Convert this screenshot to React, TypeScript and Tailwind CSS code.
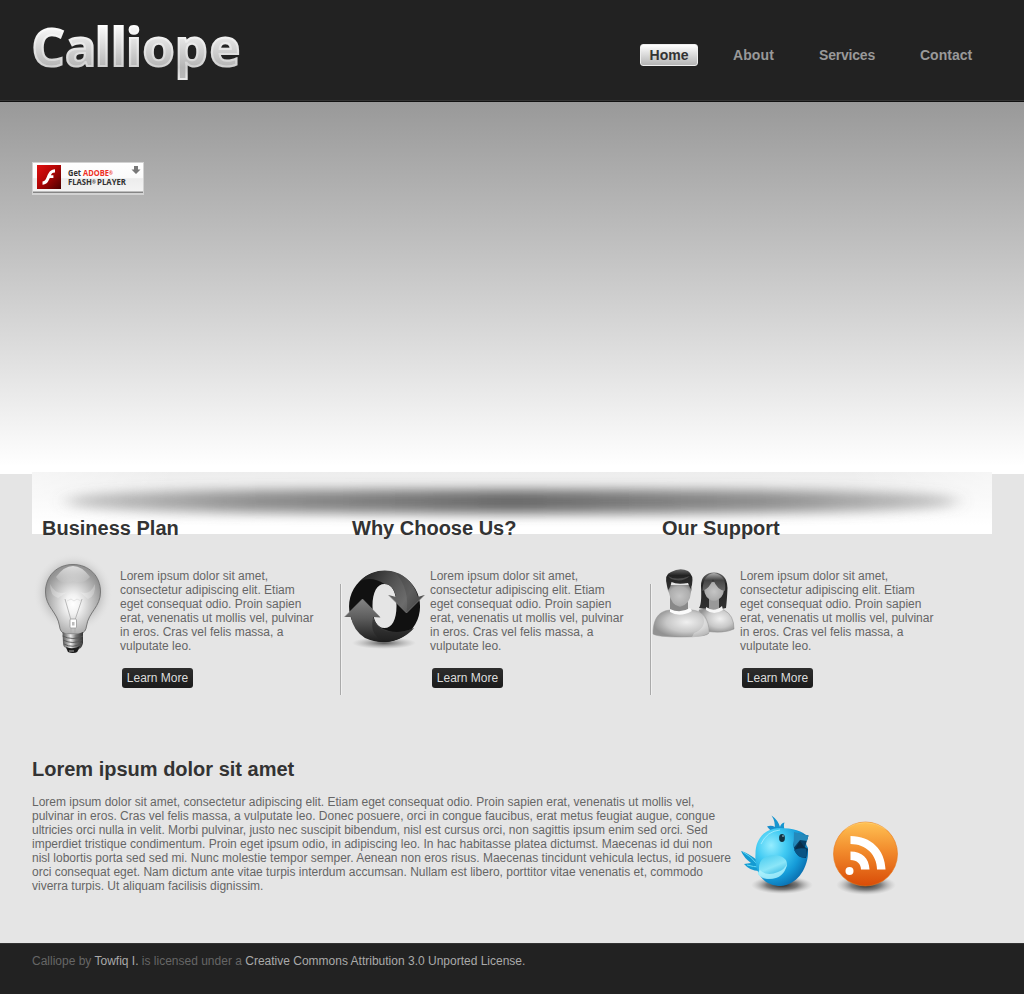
import React from "react";

const NAV = [
  { label: "About", cls: "w-[86px] tracking-[0.1px]" },
  { label: "Services", cls: "w-[101px] tracking-[-0.2px]" },
  { label: "Contact", cls: "w-[72px]" },
];
const BLURB = [
  "Lorem ipsum dolor sit amet,",
  "consectetur adipiscing elit. Etiam",
  "eget consequat odio. Proin sapien",
  "erat, venenatis ut mollis vel, pulvinar",
  "in eros. Cras vel felis massa, a",
  "vulputate leo.",
];
const BODY = [
  "Lorem ipsum dolor sit amet, consectetur adipiscing elit. Etiam eget consequat odio. Proin sapien erat, venenatis ut mollis vel,",
  "pulvinar in eros. Cras vel felis massa, a vulputate leo. Donec posuere, orci in congue faucibus, erat metus feugiat augue, congue",
  "ultricies orci nulla in velit. Morbi pulvinar, justo nec suscipit bibendum, nisl est cursus orci, non sagittis ipsum enim sed orci. Sed",
  "imperdiet tristique condimentum. Proin eget ipsum odio, in adipiscing leo. In hac habitasse platea dictumst. Maecenas id dui non",
  "nisl lobortis porta sed sed mi. Nunc molestie tempor semper. Aenean non eros risus. Maecenas tincidunt vehicula lectus, id posuere",
  "orci consequat eget. Nam dictum ante vitae turpis interdum accumsan. Nullam est libero, porttitor vitae venenatis et, commodo",
  "viverra turpis. Ut aliquam facilisis dignissim.",
];

type Stop = [number, string, number?];
function Linear({ id, stops, x2 = 0, y2 = 1 }: { id: string; stops: Stop[]; x2?: number; y2?: number }) {
  return (
    <linearGradient id={id} x1="0" y1="0" x2={x2} y2={y2}>
      {stops.map(([o, c, a]) => <stop key={o} offset={o} stopColor={c} stopOpacity={a ?? 1} />)}
    </linearGradient>
  );
}
function Radial({ id, stops, cx = 0.5, cy = 0.5, r = 0.5 }: { id: string; stops: Stop[]; cx?: number; cy?: number; r?: number }) {
  return (
    <radialGradient id={id} cx={cx} cy={cy} r={r}>
      {stops.map(([o, c, a]) => <stop key={o} offset={o} stopColor={c} stopOpacity={a ?? 1} />)}
    </radialGradient>
  );
}

function Logo() {
  return (
    <svg width="220" height="80" viewBox="28 6 220 80" className="block overflow-visible">
      <defs>
        <linearGradient id="logo" gradientUnits="userSpaceOnUse" x1="0" y1="25" x2="0" y2="78">
          <stop offset="0" stopColor="#fcfcfc" />
          <stop offset="0.8" stopColor="#b4b4b4" />
          <stop offset="1" stopColor="#b8b8b8" />
        </linearGradient>
        <linearGradient id="logoEdge" gradientUnits="userSpaceOnUse" x1="0" y1="25" x2="0" y2="78">
          <stop offset="0" stopColor="#ffffff" />
          <stop offset="0.8" stopColor="#d0d0d0" />
          <stop offset="1" stopColor="#e8e8e8" />
        </linearGradient>
      </defs>
      <text x="31.5 65 94.700 110.700 126 142.500 174.800 209.500" y="66" fontSize="52" fontWeight="700"
        fill="url(#logo)" stroke="url(#logoEdge)" strokeWidth="2.2" strokeLinejoin="miter" className="font-['Open_Sans',sans-serif]">Calliope</text>
    </svg>
  );
}

function FlashBadge() {
  return (
    <svg width="112" height="33" viewBox="0 0 112 33" className="block">
      <defs>
        <Linear id="fbg" stops={[[0, "#ffffff"], [0.5, "#fafafa"], [0.52, "#ececec"], [1, "#f4f4f4"]]} />
        <Linear id="fred" x2={1} stops={[[0, "#e01010"], [0.45, "#b40505"], [1, "#4a0000"]]} />
      </defs>
      <rect width="112" height="33" fill="#d2d2d2" />
      <rect x="1" y="1" width="110" height="30" fill="url(#fbg)" />
      <rect x="1" y="29.5" width="110" height="1.5" fill="#858585" />
      <rect x="5" y="3" width="24" height="24" fill="url(#fred)" />
      <path d="M23 7.2v3.2c-2.8 0-3.5 1.2-4.1 2.8h2.5v2.8h-3.6c-1.6 3.8-3.1 6.500-7.3 6.700v-3.2c2.6-.2 3.3-2.1 4.4-4.8C16.500 10.700 18.200 7.400 23 7.200z" fill="#fff" />
      <g fontSize="8" fontWeight="700" className="font-['Open_Sans',sans-serif]" fill="#303030">
        <text x="36" y="14" textLength="13" lengthAdjust="spacingAndGlyphs">Get</text>
        <text x="51" y="14" fill="#ee2e24"><tspan textLength="26" lengthAdjust="spacingAndGlyphs">ADOBE</tspan><tspan x="77" dy="-1.5" fontSize="4.500">®</tspan></text>
        <text x="36" y="23"><tspan textLength="24" lengthAdjust="spacingAndGlyphs">FLASH</tspan><tspan x="60" dy="-1.5" fontSize="4.500">®</tspan><tspan x="65" dy="1.5" textLength="29" lengthAdjust="spacingAndGlyphs">PLAYER</tspan></text>
      </g>
      <path d="M102 4h4v3.500h2.500l-4.500 4.500-4.500-4.500h2.500z" fill="#777" />
    </svg>
  );
}

function ShadowBar() {
  return (
    <svg width="960" height="62" viewBox="0 0 960 62" className="block">
      <defs>
        <Linear id="sbg" stops={[[0, "#ededed"], [0.4, "#f4f4f4"], [0.85, "#ffffff"], [1, "#ffffff"]]} />
        <Linear id="sdark" x2={1} y2={0} stops={[[0, "#777", 0.4], [0.2, "#666", 0.7], [0.5, "#505050", 0.86], [0.8, "#666", 0.7], [1, "#777", 0.4]]} />
        <Linear id="sside" x2={1} y2={0} stops={[[0, "#fff", 0.5], [0.15, "#fff", 0], [0.85, "#fff", 0], [1, "#fff", 0.5]]} />
        <filter id="sblur" x="-5%" y="-200%" width="110%" height="500%"><feGaussianBlur stdDeviation="9 6" /></filter>
      </defs>
      <rect width="960" height="62" fill="url(#sbg)" />
      <rect width="960" height="62" fill="url(#sside)" />
      <path d="M34 29.500C34 18 180 17.500 480 17.500C780 17.500 926 18 926 29.500C926 40 780 41.500 480 41.500C180 41.500 34 40 34 29.500z" fill="url(#sdark)" filter="url(#sblur)" />
    </svg>
  );
}

function Bulb() {
  return (
    <svg width="88" height="110" viewBox="32 550 88 110" className="block">
      <defs>
        <Radial id="bglow" stops={[[0, "#999", 1], [0.65, "#b0b0b0", 0.7], [1, "#e5e5e5", 0]]} />
        <Radial id="bglass" cx={0.5} cy={0.57} r={0.55} stops={[[0, "#ffffff"], [0.25, "#f2f2f2"], [0.6, "#c6c6c6"], [1, "#939393"]]} />
        <Linear id="bshine" stops={[[0, "#fff", 0.7], [1, "#fff", 0.02]]} />
        <Linear id="bcap" x2={1} y2={0} stops={[[0, "#555"], [0.2, "#999"], [0.4, "#eee"], [0.65, "#777"], [1, "#333"]]} />
      </defs>
      <circle cx="73" cy="593" r="40" fill="url(#bglow)" />
      <path d="M73 564.500C57 564.500 45.500 576 45.500 592C45.500 607 57.500 612 59.500 626Q60 632 65 634H80.500Q86 632 86.500 626C88.500 612 100.500 607 100.500 592C100.500 576 89 564.500 73 564.500z" fill="url(#bglass)" stroke="#777" strokeWidth="1" />
      <path d="M56 577Q64 566 73 566T90 577Q83 585 73 581Q62 586 56 577z" fill="url(#bshine)" />
      <path d="M50 584Q56 596 67 592L58 598Q50 596 50 584M95 584Q90 596 80 592L88 599Q96 596 95 584" fill="#fff" opacity=".25" />
      <path d="M65 599l6 21v13M82 599l-7 21v13" fill="none" stroke="#aaa" strokeWidth=".8" />
      <path d="M67 601l4-2 3 2 3-2 4 2" fill="none" stroke="#ddd" strokeWidth=".8" />
      <rect x="70" y="619" width="6.500" height="9" rx="1" fill="#fff" stroke="#999" strokeWidth=".8" />
      <path d="M72 622h2.500v3.500h-2.500z" fill="#bbb" />
      <path d="M62.500 632Q73 637 83 632V643Q82 648 79 649L77 652Q73 654 68 652L66 648Q63 647 63 643z" fill="url(#bcap)" />
      <path d="M62.500 636Q73 641 83 636M63 640Q73 645 82 640M64 644Q73 649 82 643" fill="none" stroke="#555" strokeWidth=".9" />
      <path d="M66 647Q73 650 80 646L77 652Q73 654 68 652z" fill="#1b1b1b" />
      <path d="M69 651h5" stroke="#aaa" />
    </svg>
  );
}

function Arrows() {
  return (
    <svg width="88" height="110" viewBox="342 550 88 110" className="block">
      <defs>
        <linearGradient id="atop" gradientUnits="userSpaceOnUse" x1="362" y1="575" x2="415" y2="608">
          <stop offset="0" stopColor="#222" />
          <stop offset=".5" stopColor="#555" />
          <stop offset=".8" stopColor="#6c6c6c" />
          <stop offset="1" stopColor="#555" />
        </linearGradient>
        <Linear id="abot" stops={[[0, "#858585"], [0.45, "#5c5c5c"], [1, "#1c1c1c"]]} />
        <Radial id="ashadow" stops={[[0, "#333", 0.8], [1, "#888", 0]]} />
      </defs>
      <ellipse cx="384" cy="643" rx="32" ry="6" fill="url(#ashadow)" />
      <path fillRule="evenodd" d="M384.500 571a35.500 35.500 0 1 0 .1 0zM384.500 584C392 584 396.500 592 396.500 606S392 628 384.500 628S372.500 620 372.500 606S377 584 384.500 584z" fill="#111" />
      <path d="M360 581C374 567 395 568 407 579Q415 586 418 597L424.500 595L406.500 613L388.500 595L396 597Q393 584 384.500 584Q372 576 360 581z" fill="url(#atop)" />
      <path d="M396 573Q412 578 418 597L424.500 595L406.500 613Q410 590 396 573z" fill="#333" opacity=".25" />
      <path d="M362.500 599L344.500 617H351Q353 630 365 638Q383 646 400 638Q409 634 414 628Q400 634 389 631Q376 628 373 617L380.500 617.500z" fill="url(#abot)" />
      <path d="M373 618Q378 632 394 632Q405 632 414 628Q403 641 386 641Q369 637 373 618z" fill="#222" opacity=".5" />
      <path d="M344.500 617L362.500 599L380 617M388.500 595L406.500 613L424.500 595" fill="none" stroke="#888" strokeWidth=".6" />
    </svg>
  );
}

function People() {
  return (
    <svg width="88" height="110" viewBox="652 550 88 110" className="block">
      <defs>
        <Radial id="pbody" cx={0.6} cy={0.45} r={0.6} stops={[[0, "#f0f0f0"], [0.6, "#c8c8c8"], [1, "#929292"]]} />
        <Radial id="pface" cx={0.5} cy={0.5} r={0.6} stops={[[0, "#c5c5c5"], [0.7, "#adadad"], [1, "#808080"]]} />
        <Linear id="phair" stops={[[0, "#666"], [0.3, "#222"], [1, "#333"]]} />
        <Linear id="pfringe" stops={[[0, "#b0b0b0"], [0.4, "#444"], [1, "#666"]]} />
      </defs>
      <path d="M701 586Q701 573 714 572.500Q727 573 727.500 588Q727 600 726 608Q715 611 699 608Q702 604 701 586z" fill="url(#phair)" />
      <path d="M699 610Q713 606 724 610Q734 615 734 629Q724 634 704 631z" fill="url(#pbody)" stroke="#888" strokeWidth=".5" />
      <path d="M709 598h10v10q-5 5-10 0z" fill="#999" />
      <path d="M706 607Q714 613 722 606L723 610Q714 616 706 610z" fill="#f6f6f6" />
      <path d="M704 584Q714 579 724 585Q725 595 719 599Q714 604 709 599Q703 595 704 584z" fill="url(#pface)" />
      <path d="M714 573Q703 574 702.500 591Q710 588 713 579Q717 590 725 591Q727 575 714 573z" fill="url(#pfringe)" />
      <path d="M653 631C654 615 662 610 672 610H692C703 611 709 618 709 633Q707 637 681 637Q657 637 653 634z" fill="url(#pbody)" stroke="#999" strokeWidth=".5" />
      <path d="M694 633Q707 628 703 616Q709 623 709 633Q702 637 692 637z" fill="#fff" opacity=".3" />
      <path d="M670 597h18v13q-8 6-18 0z" fill="#888" />
      <path d="M670 609Q680 614 690 608L692 611Q680 618 670 612z" fill="#fbfbfb" />
      <path d="M668 585H690Q693 587 691 592Q690 605 680 607Q671 605 669 593Q666 587 668 585z" fill="url(#pface)" />
      <path d="M668.500 590L667 586Q664 574 671 572Q680 567 688 571Q694 575 692 585L690.500 589L688 583Q677 585 671.500 582Q671 586 668.500 590z" fill="url(#phair)" />
      <path d="M668 576Q676 581 690 576Q682 583 671 579z" fill="#666" opacity=".6" />
    </svg>
  );
}

function Bird() {
  return (
    <svg width="81" height="90" viewBox="737 810 81 90" className="block">
      <defs>
        <Radial id="twshadow" stops={[[0, "#222", 1], [0.5, "#555", 0.75], [1, "#aaa", 0]]} />
        <Radial id="twbody" cx={0.3} cy={0.3} r={0.8} stops={[[0, "#96edff"], [0.35, "#42cbf3"], [0.7, "#159bd8"], [1, "#0866a8"]]} />
        <Linear id="twwing" x2={0.5} stops={[[0, "#42c9ef"], [0.6, "#8be6f8"], [1, "#31b6e1"]]} />
      </defs>
      <ellipse cx="782" cy="885" rx="31" ry="9" fill="url(#twshadow)" />
      <path d="M757 860Q748 853 741 851Q744 858 751 863L744 864Q750 871 759 871z" fill="#149bd2" />
      <path d="M743 852Q751 856 757 864M747 865Q754 867 759 867" stroke="#65d9f5" fill="none" />
      <path d="M774.500 830Q776 822 771.500 815.500Q778 820 780 827Q781 823 784.500 822.500Q783 826 785 831z" fill="#1695cf" />
      <path d="M767 826.500Q774 824 779 831L771 831z" fill="#168dcc" />
      <path d="M779 828C764 829 755.500 839 755.500 854C754 875 765 886 781 886C796 885 807 870 808 854L808 848Q804 843 808 837Q800 828 779 828z" fill="url(#twbody)" />
      <path d="M795 833L808.500 835.500L805 847L808 849L806 858Q795 858 793.500 845z" fill="#073f66" />
      <path d="M794 832L808.500 835.500L807 841L800 840L793.500 848z" fill="#2489bb" />
      <path d="M800 841L805 848L794.500 850z" fill="#092d48" />
      <path d="M794 850Q800 847 806 849L807 856Q800 861 794 850z" fill="#0a5484" />
      <path d="M759 870Q758 856 774 855Q788 856 787 866Q780 882 766 878Q760 877 758 874z" fill="url(#twwing)" />
      <path d="M760 870Q767 877 778 872Q785 869 787 864Q784 880 767 879Q759 878 758 873z" fill="#b4f4ff" opacity=".75" />
      <ellipse cx="782" cy="838" rx="2.900" ry="4" fill="#123342" />
      <circle cx="783" cy="836" r=".8" fill="#bde" />
      <path d="M761 844Q767 831 780 830" fill="none" stroke="#b8f4ff" strokeWidth="1" opacity=".7" />
    </svg>
  );
}

function Rss() {
  return (
    <svg width="80" height="90" viewBox="828 810 80 90" className="block">
      <defs>
        <Linear id="rss" stops={[[0, "#ffc254"], [0.45, "#f28b2c"], [1, "#d94c08"]]} />
        <Radial id="rssshadow" stops={[[0, "#222", 1], [0.5, "#555", 0.7], [1, "#aaa", 0]]} />
      </defs>
      <ellipse cx="866" cy="885" rx="30" ry="10" fill="url(#rssshadow)" />
      <circle cx="865.500" cy="854" r="32" fill="url(#rss)" stroke="#e97819" strokeWidth=".6" />
      <path d="M845 829Q865 816 886 829" fill="none" stroke="#ffdb83" strokeWidth="1" opacity=".5" />
      <circle cx="849.500" cy="871" r="4" fill="#fff" />
      <path d="M850.500 836C871 836 885 850 885.500 869.500H877C877 855 866 844 850.500 844z" fill="#fff" />
      <path d="M850.500 851.500C862 851.500 869 858 869.500 869.500H861C861 864 857 860 850.500 860z" fill="#fff" />
    </svg>
  );
}

const COLUMNS = [
  { title: "Business Plan", Icon: Bulb },
  { title: "Why Choose Us?", Icon: Arrows },
  { title: "Our Support", Icon: People },
];

export default function App() {
  return (
    <div className="flex h-[994px] w-[1024px] flex-col overflow-hidden bg-[#e5e5e5] font-['Liberation_Sans',Arial,sans-serif] text-[12px] leading-[14px] text-[#666]">
      <header className="flex h-[102px] shrink-0 items-start justify-between border-b border-[#111] bg-[#222] pl-7 shadow-[inset_0_-1px_0_#333]">
        <div className="pt-1.5"><Logo /></div>
        <nav className="flex pr-[42px] pt-11 text-[14px] font-bold leading-[22px] text-[#999]">
          <a className="mr-[25px] h-[22px] w-[58px] rounded-[3px] border border-[#eee] bg-linear-to-b from-white to-[#b5b5b5] text-center leading-5 text-[#333]">Home</a>
          {NAV.map(({ label, cls }) => <a key={label} className={`${cls} pl-2.5`}>{label}</a>)}
        </nav>
      </header>
      <section className="h-[372px] shrink-0 bg-linear-to-b from-[#999] to-white to-98% pl-8 pt-[60px]">
        <FlashBadge />
      </section>
      <main className="h-[469px] shrink-0 px-8">
        <div className="-mt-0.5 grid h-[62px] grid-cols-1">
          <div className="col-start-1 row-start-1"><ShadowBar /></div>
          <div className="z-10 col-start-1 row-start-1 grid grid-cols-[310px_310px_310px] pt-11">
            {COLUMNS.map(({ title }) => <h2 key={title} className="pl-2.5 text-[20px] font-bold leading-6 text-[#333]">{title}</h2>)}
          </div>
        </div>
        <div className="mt-4 grid grid-cols-[310px_310px_310px]">
          {COLUMNS.map(({ title, Icon }, i) => (
            <article key={title} className="flex h-[146px]">
              {i > 0 && <div className="-ml-0.5 mt-[34px] h-[111px] w-0.5 border-l border-[#aaa] bg-[#f0f0f0]" />}
              <Icon />
              <div className="pt-[19px]">
                <p className="whitespace-nowrap">{BLURB.map((l) => <span key={l} className="block">{l}</span>)}</p>
                <a className="ml-0.5 mt-[15px] block h-5 w-[71px] rounded-[3px] bg-linear-to-b from-[#2d2d2d] to-[#1b1b1b] text-center leading-5 text-[#ddd]">Learn More</a>
              </div>
            </article>
          ))}
        </div>
        <div className="mt-[61px] flex">
          <div className="w-[705px] shrink-0">
            <h2 className="text-[20px] font-bold leading-6 text-[#333]">Lorem ipsum dolor sit amet</h2>
            <p className="mt-3.5 whitespace-nowrap">{BODY.map((l) => <span key={l} className="block">{l}</span>)}</p>
          </div>
          <div className="flex gap-2.5 pt-[53px]"><Bird /><Rss /></div>
        </div>
      </main>
      <footer className="h-[51px] shrink-0 border-t border-[#333] bg-[#222] pl-8 pt-2.5 text-[#666]">
        Calliope by <a className="text-[#aaa]">Towfiq I.</a> is licensed under a <a className="text-[#aaa]">Creative Commons Attribution 3.0 Unported License.</a>
      </footer>
    </div>
  );
}
